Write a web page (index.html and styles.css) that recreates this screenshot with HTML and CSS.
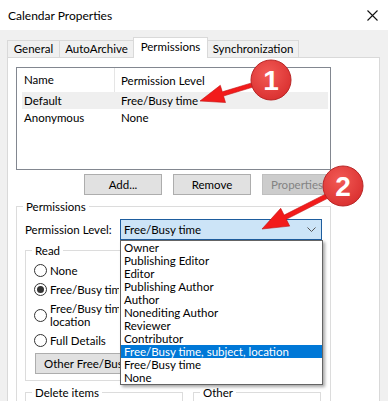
FILE: index.html
```html
<!DOCTYPE html>
<html lang="en">
<head>
  <meta charset="UTF-8" />
  <title>Calendar Properties</title>
  <link rel="stylesheet" href="styles.css">
</head>
<body>
  <div class="titlebar">
    <span class="title">Calendar Properties</span>
    <svg class="close" width="11" height="11" viewBox="0 0 11 11"><path d="M0.5 0.5 L10.5 10.5 M10.5 0.5 L0.5 10.5" stroke="#111" stroke-width="1.1" fill="none"/></svg>
  </div>

  <div class="dialog">
    <div class="tabs">
      <div class="tab tab-general">General</div>
      <div class="tab tab-archive">AutoArchive</div>
      <div class="tab tab-perm active">Permissions</div>
      <div class="tab tab-sync">Synchronization</div>
    </div>

    <div class="panel">
      <div class="list">
        <div class="list-head">
          <div class="col-name">Name</div>
          <div class="col-level">Permission Level</div>
        </div>
        <div class="list-row selected">
          <div class="cell-name">Default</div>
          <div class="cell-level">Free/Busy time</div>
        </div>
        <div class="list-row">
          <div class="cell-name">Anonymous</div>
          <div class="cell-level">None</div>
        </div>
      </div>

      <div class="btn-row">
        <div class="btn">Add...</div>
        <div class="btn">Remove</div>
        <div class="btn disabled">Properties...</div>
      </div>

      <div class="group perm-group">
        <span class="legend">Permissions</span>
        <div class="level-row">
          <span class="level-label">Permission Level:</span>
          <div class="combo">
            <span>Free/Busy time</span>
            <svg class="chev" width="9" height="5" viewBox="0 0 9 5"><path d="M0.5 0.5 L4.5 4.5 L8.5 0.5" stroke="#555" stroke-width="1" fill="none"/></svg>
            <div class="dropdown">
              <div class="opt">Owner</div>
              <div class="opt">Publishing Editor</div>
              <div class="opt">Editor</div>
              <div class="opt">Publishing Author</div>
              <div class="opt">Author</div>
              <div class="opt">Nonediting Author</div>
              <div class="opt">Reviewer</div>
              <div class="opt">Contributor</div>
              <div class="opt hl">Free/Busy time, subject, location</div>
              <div class="opt">Free/Busy time</div>
              <div class="opt">None</div>
            </div>
          </div>
        </div>

        <div class="group read-group">
          <span class="legend">Read</span>
          <div class="radios">
            <div class="radio-row"><span class="radio"></span><span class="rlabel">None</span></div>
            <div class="radio-row"><span class="radio checked"></span><span class="rlabel">Free/Busy time</span></div>
            <div class="radio-row two"><span class="radio"></span><span class="rlabel">Free/Busy time, subject,<br>location</span></div>
            <div class="radio-row"><span class="radio"></span><span class="rlabel">Full Details</span></div>
          </div>
          <div class="btn other-btn"><span class="clip">Other Free/Busy...</span></div>
        </div>

        <div class="bottom-groups">
          <div class="group del-group"><span class="legend">Delete items</span></div>
          <div class="group other-group"><span class="legend">Other</span></div>
        </div>
      </div>
    </div>
  </div>

  <svg class="marks" width="388" height="401" viewBox="0 0 388 401">
    <defs>
      <radialGradient id="dot" cx="0.42" cy="0.35" r="0.7">
        <stop offset="0" stop-color="#f25a55"/>
        <stop offset="1" stop-color="#d92f2f"/>
      </radialGradient>
    </defs>
    <polygon points="200,101 225.5,102.5 223.5,96 254.6,86.6 253.4,82.4 222.3,91.8 220.3,85.3" fill="#f21b1b" stroke="#c21010" stroke-width="0.6"/>
    <polygon points="262,229 289.7,226.1 286.3,219.3 328.1,198.1 325.9,193.9 284.1,215.1 280.7,208.3" fill="#f21b1b" stroke="#c21010" stroke-width="0.6"/>
    <circle cx="271" cy="80" r="20" fill="url(#dot)" stroke="#b82626" stroke-width="1"/>
    <circle cx="343" cy="186" r="20" fill="url(#dot)" stroke="#b82626" stroke-width="1"/>
    <text x="271" y="90" class="num">1</text>
    <text x="343" y="196" class="num">2</text>
  </svg>
</body>
</html>
```

FILE: styles.css
```css
body { margin: 0; width: 388px; height: 401px; overflow: hidden; position: relative; font-family: Lato, "Noto Sans", sans-serif; font-size: 11.5px; color: #000; background: #f0f0f0; }

.titlebar { height: 30px; background: #fff; display: flex; align-items: center; padding-left: 8px; }
.title { font-size: 12px; }
.close { margin-left: auto; margin-right: 10px; }

.dialog { height: 371px; overflow: hidden; padding: 7px 0 0 7px; box-sizing: border-box; }
.tabs { display: flex; align-items: flex-end; height: 20px; }
.tab { box-sizing: border-box; height: 17px; line-height: 15px; text-align: center; border: 1px solid #d9d9d9; border-bottom: none; background: #f0f0f0; margin-left: -1px; }
.tab-general { width: 53px; margin-left: 0; }
.tab-archive { width: 75px; }
.tab-perm { width: 75px; }
.tab-sync { width: 92px; }
.tab.active { height: 21px; margin-bottom: -1px; background: #fff; position: relative; z-index: 1; line-height: 17px; }

.panel { width: 373px; height: 360px; box-sizing: border-box; background: #fff; border: 1px solid #d9d9d9; padding: 9px 0 0 8px; }

.list { width: 315px; height: 103px; box-sizing: border-box; border: 1px solid #828790; }
.list-head { display: flex; height: 24px; align-items: center; }
.col-name { width: 90px; padding-left: 7px; border-right: 1px solid #e5e5e5; height: 24px; line-height: 24px; }
.col-level { padding-left: 6px; }
.list-row { display: flex; height: 17px; line-height: 17px; margin: 0 2px 0 5px; }
.list-row.selected { background: #efefef; }
.cell-name { width: 99px; padding-left: 2px; box-sizing: border-box; }

.btn-row { display: flex; gap: 11px; padding-left: 68px; margin-top: 4px; }
.btn { box-sizing: border-box; width: 78px; height: 21px; line-height: 19px; text-align: center; background: #e1e1e1; border: 1px solid #adadad; }
.btn.disabled { background: #cccccc; border-color: #bfbfbf; color: #838383; }

.group { border: 1px solid #dcdcdc; box-sizing: border-box; }
.legend { display: block; width: fit-content; height: 16px; background: #fff; line-height: 16px; margin-top: -8px; margin-left: 6px; padding: 0 3px; }

.perm-group { width: 315px; height: 200px; margin-top: 11px; }
.level-row { display: flex; align-items: center; margin-top: 4px; padding-left: 8px; }
.level-label { width: 95px; }
.combo { position: relative; box-sizing: border-box; width: 202px; height: 21px; background: #cce4f7; border: 1px solid #1e5d9e; display: flex; align-items: center; padding-left: 3px; }
.chev { margin-left: auto; margin-right: 5px; }

.dropdown { position: absolute; top: 20px; left: -1px; width: 203px; height: 145px; box-sizing: border-box; background: #fff; border: 1px solid #646464; box-shadow: 2px 2px 3px rgba(0,0,0,0.35); z-index: 5; }
.opt { height: 13px; line-height: 13px; padding-left: 3px; white-space: nowrap; }
.opt.hl { background: #0078d7; color: #fff; }

.read-group { width: 296px; height: 131px; margin: 10px 0 0 8px; }
.radios { margin-top: 2px; }
.radio-row { display: flex; align-items: center; height: 19px; padding-left: 8px; }
.radio-row.two { height: 32px; line-height: 13px; }
.radio { box-sizing: border-box; width: 13px; height: 13px; border: 1px solid #333; border-radius: 50%; margin-right: 3px; display: flex; align-items: center; justify-content: center; background: #fff; flex-shrink: 0; }
.radio.checked::after { content: ""; width: 7px; height: 7px; border-radius: 50%; background: #333; }
.rlabel { max-width: 69px; overflow: hidden; white-space: nowrap; }
.other-btn { width: 130px; margin: 3px 0 0 9px; text-align: left; padding-left: 8px; }
.clip { display: inline-block; max-width: 76px; overflow: hidden; white-space: nowrap; vertical-align: top; }

.bottom-groups { display: flex; gap: 10px; margin: 11px 0 0 8px; }
.del-group { width: 158px; height: 20px; }
.other-group { width: 128px; height: 20px; }

.marks { position: absolute; top: 0; left: 0; pointer-events: none; z-index: 10; }
.num { font-family: "Liberation Sans", Arial, sans-serif; font-weight: bold; font-size: 28px; fill: #fff; text-anchor: middle; }
```
